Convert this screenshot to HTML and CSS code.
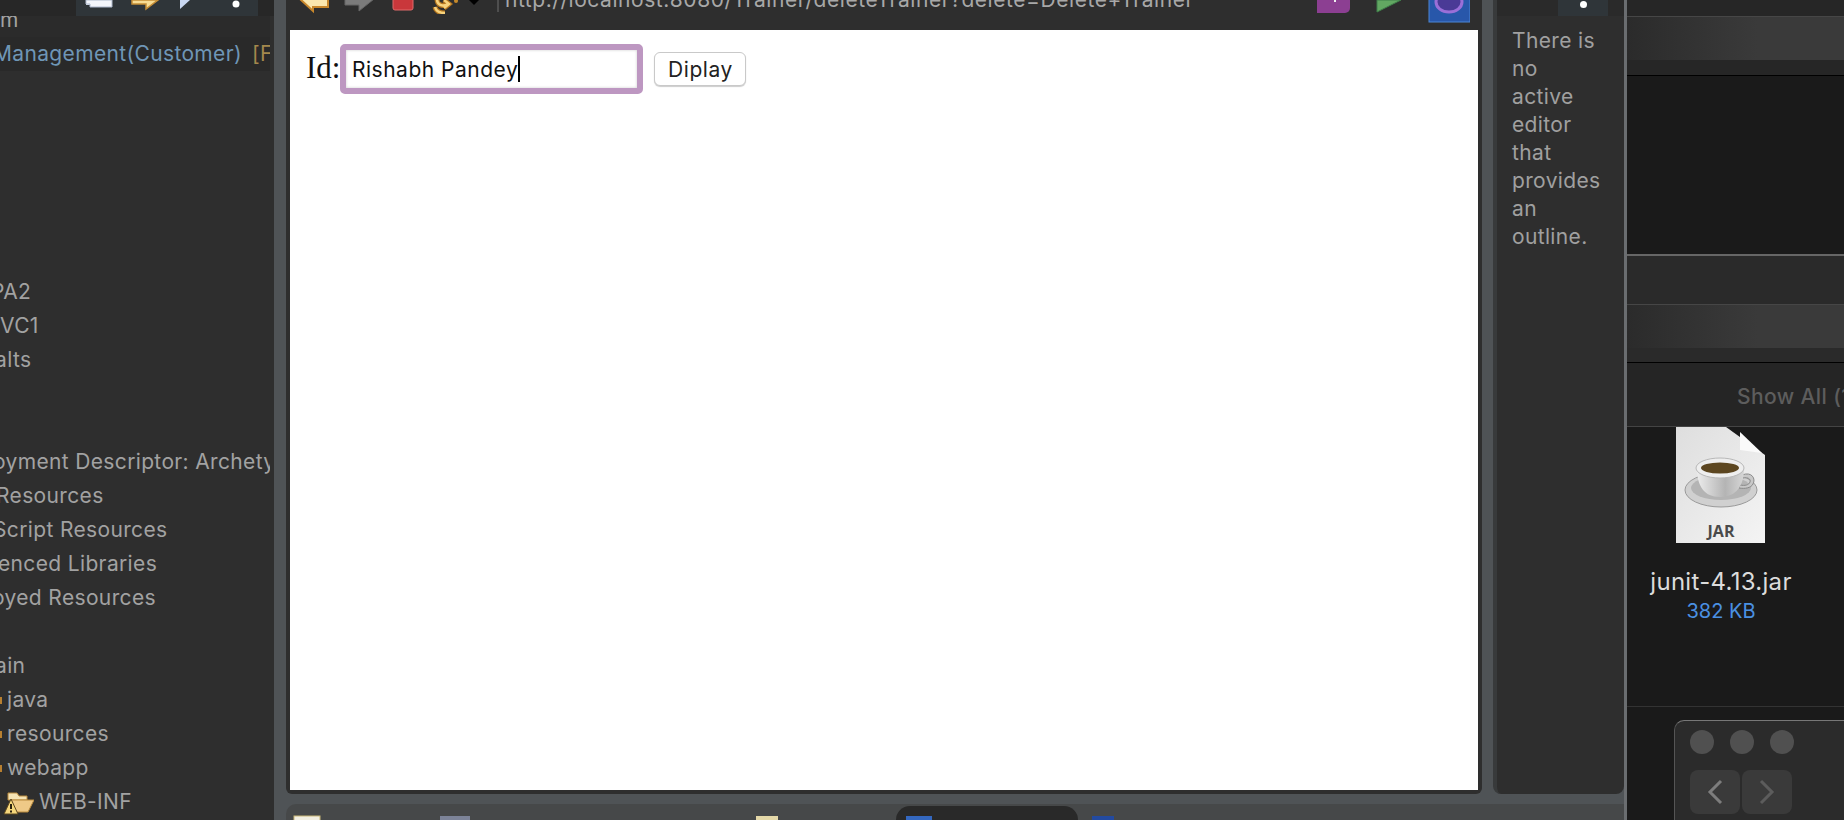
FILE: index.html
```html
<!DOCTYPE html>
<html lang="en">
<head>
    <meta charset="UTF-8">
    <meta name="viewport" content="width=device-width, initial-scale=1.0">
    <title>Eclipse - deleteTrainer</title>
    <link rel="stylesheet" href="styles.css">
</head>
<body>
    <!-- Project explorer -->
    <aside class="explorer">
        <div class="view-top">
            <div class="view-tools explorer-tools">
                <svg width="182" height="16" viewBox="0 0 182 16">
                    <path d="M10 0v5h26v-5z" fill="#dfe6f2"/>
                    <path d="M14 7h22v-7h-26v4h4z" fill="#f4f6fb" stroke="#aeb9cc"/>
                    <path d="M56 0v4h14v5l12-9z" fill="#f8dc94" stroke="#c58d35" stroke-width="1.5"/>
                    <path d="M104 0h10l-10 9z" fill="#c9d8f2"/>
                    <circle cx="160" cy="4" r="3.5" fill="#fff"/>
                </svg>
            </div>
        </div>
        <ul class="tree">
            <li class="row row-first">m</li>
            <li class="row row-selected"><span class="cut-m link-name">Management(Customer)</span><span class="tag">[F</span></li>
            <li class="row"></li>
            <li class="row"></li>
            <li class="row"></li>
            <li class="row"></li>
            <li class="row"></li>
            <li class="row"></li>
            <li class="row"><span class="cut-9">PA2</span></li>
            <li class="row"><span>VC1</span></li>
            <li class="row"><span class="cut-5">alts</span></li>
            <li class="row"></li>
            <li class="row"></li>
            <li class="row"><span class="cut-7">oyment Descriptor: Archetype</span></li>
            <li class="row"><span class="cut-4">Resources</span></li>
            <li class="row"><span class="cut-7">Script Resources</span></li>
            <li class="row"><span class="cut-2">enced Libraries</span></li>
            <li class="row"><span class="cut-8">oyed Resources</span></li>
            <li class="row"></li>
            <li class="row"><span class="cut-5">ain</span></li>
            <li class="row"><i class="folder-end"></i>java</li>
            <li class="row"><i class="folder-end"></i>resources</li>
            <li class="row"><i class="folder-end"></i>webapp</li>
            <li class="row">
                <svg class="folder-icon" width="32" height="26" viewBox="0 0 32 26">
                    <path d="M6 4h9l2 3h8v4H6z" fill="#f5e3b4" stroke="#b98a3c"/>
                    <path d="M9 11h23l-6 12H6z" fill="#efc987" stroke="#b98a3c"/>
                    <path d="M9 10l7 15H2z" fill="#f6d77c" stroke="#5b4620" stroke-linejoin="round"/>
                    <path d="M9 15v5M9 21.500v2" stroke="#2b2110" stroke-width="2"/>
                </svg>
                WEB-INF
            </li>
        </ul>
    </aside>

    <!-- Browser view and outline -->
    <main class="workbench">
        <div class="views">
            <section class="browser">
                <div class="browser-toolbar">
                    <svg class="nav-icons" width="200" height="14" viewBox="0 0 200 14">
                        <path d="M1 -1l13 12v-4h15v-8z" fill="#fbe7ae" stroke="#c8872b" stroke-width="2"/>
                        <path d="M46 -1v6h14v6l15-12z" fill="#7b7b7b" stroke="#666" stroke-width="1"/>
                        <rect x="94" y="-6" width="20" height="16" rx="2" fill="#c9373b" stroke="#e06a6a"/>
                        <path d="M138 -1c0 6 5 8 11 5M145 0l5 4-5 4M146 13c-5 0-9-2-10-6" fill="none" stroke="#b5761f" stroke-width="5"/>
                        <path d="M138 -1c0 6 5 8 11 5M145 0l5 4-5 4M146 13c-5 0-9-2-10-6" fill="none" stroke="#f7d27c" stroke-width="2.500"/>
                        <circle cx="157" cy="1" r="2" fill="#c68a2b"/>
                        <path d="M170 0h10l-5 5z" fill="#000"/>
                        <path d="M199 0v12" stroke="#5a5a5a" stroke-width="1.500"/>
                    </svg>
                    <div class="url">http://localhost:8080/Trainer/deleteTrainer?delete=Delete+Trainer</div>
                    <svg class="run-icons" width="154" height="23" viewBox="0 0 154 23">
                        <path d="M1 0h33v8a5 5 0 0 1-5 5H1z" fill="#8c3f92"/>
                        <path d="M19 0v2" stroke="#eee" stroke-width="2"/>
                        <path d="M61 0v12l24-12z" fill="#62a862" stroke="#3f7f4a"/>
                        <rect x="113" y="-6" width="41" height="28" fill="#2857aa" stroke="#4a86d6"/>
                        <ellipse cx="133" cy="2" rx="13" ry="10" fill="#4a3a96" stroke="#9a6fd8" stroke-width="3"/>
                    </svg>
                </div>
                <div class="web-page">
                    <label class="id-label">Id:</label>
                    <div class="id-input">Rishabh Pandey<span class="caret"></span></div>
                    <button class="show-btn" type="button">Diplay</button>
                </div>
            </section>
            <section class="outline">
                <div class="view-top">
                    <div class="view-tools outline-tools"><span class="dot"></span></div>
                </div>
                <p class="outline-text">There is<br>no<br>active<br>editor<br>that<br>provides<br>an<br>outline.</p>
            </section>
        </div>
        <div class="tab-bar">
            <svg class="tab-icons" width="610" height="12" viewBox="0 0 610 12">
                <rect x="8" y="4" width="26" height="12" fill="#f2efe2" stroke="#c9b878"/>
                <rect x="154" y="4" width="30" height="12" fill="#7c8398"/>
                <rect x="470" y="4" width="22" height="12" fill="#e4d8a8"/>
            </svg>
            <div class="active-tab"><i class="tab-mark"></i></div>
            <i class="tab-next"></i>
        </div>
    </main>

    <!-- Safari window behind -->
    <section class="behind">
        <div class="stripe stripe-top"><div class="title-band"></div></div>
        <div class="pane pane-one"></div>
        <div class="stripe stripe-second"><div class="title-band"></div></div>
        <div class="show-all">Show All (1)</div>
        <div class="files">
            <div class="file">
                <svg class="jar-icon" width="90" height="117" viewBox="0 0 90 117">
                    <defs>
                        <linearGradient id="pageFill" x1="0" y1="0" x2="1" y2="1">
                            <stop offset="0" stop-color="#dedede"/>
                            <stop offset="1" stop-color="#f4f4f4"/>
                        </linearGradient>
                        <linearGradient id="cupFill" x1="0" y1="0" x2="1" y2="0">
                            <stop offset="0" stop-color="#ececec"/>
                            <stop offset="0.6" stop-color="#b4b4b4"/>
                            <stop offset="1" stop-color="#d6d6d6"/>
                        </linearGradient>
                    </defs>
                    <path d="M0 0h50l39 28v88H0z" fill="url(#pageFill)"/>
                    <path d="M64 5l22 21-22-3z" fill="#fafafa"/>
                    <ellipse cx="45" cy="63" rx="36" ry="17" fill="#d0d0d0" stroke="#9a9a9a"/>
                    <ellipse cx="45" cy="61" rx="30" ry="12" fill="#b4b4b4"/>
                    <path d="M66 48c10-4 14 4 11 9-2 4-8 5-14 4l1-3c5 1 9 0 10-3 1-3-2-5-7-4z" fill="#c8c8c8" stroke="#8a8a8a"/>
                    <path d="M21 41c0 18 7 29 23 29s24-11 24-29z" fill="url(#cupFill)"/>
                    <ellipse cx="44" cy="41" rx="24" ry="10" fill="#eeeeee" stroke="#b8b8b8"/>
                    <ellipse cx="44" cy="41" rx="19" ry="5.500" fill="#5c4620"/>
                    <text class="jar-text" x="45" y="110" text-anchor="middle">JAR</text>
                </svg>
                <div class="file-name">junit-4.13.jar</div>
                <div class="file-size">382 KB</div>
            </div>
        </div>
        <div class="mini-window">
            <div class="traffic"><span></span><span></span><span></span></div>
            <div class="pager">
                <button class="pager-btn" type="button">
                    <svg width="16" height="26" viewBox="0 0 16 26"><path d="M14 2L3 13l11 11" fill="none" stroke="#7d7d7d" stroke-width="3"/></svg>
                </button>
                <button class="pager-btn" type="button">
                    <svg width="16" height="26" viewBox="0 0 16 26"><path d="M2 2l11 11L2 24" fill="none" stroke="#5c5c5c" stroke-width="3"/></svg>
                </button>
            </div>
        </div>
    </section>
</body>
</html>
```

FILE: styles.css
```css
* {
    box-sizing: border-box;
}
html, body {
    height: 100%;
}
body {
    margin: 0;
    display: flex;
    width: 1844px;
    height: 820px;
    overflow: hidden;
    background-color: #1a1a1a;
    font-family: Inter, "Noto Sans", sans-serif;
}
svg {
    display: block;
}

/* Project explorer */
.explorer {
    width: 274px;
    flex: none;
    background-color: #2e2e2e;
}
.view-top {
    height: 16px;
    background-color: #272727;
    overflow: hidden;
}
.view-tools {
    height: 16px;
    background-color: #2f3539;
}
.explorer-tools {
    margin-left: 76px;
    width: 182px;
}
.tree {
    list-style: none;
    margin: 0;
    padding: 0;
    width: 270px;
    overflow: hidden;
    color: #a2a2a2;
    font-size: 21px;
    letter-spacing: 0.35px;
}
.row {
    height: 34px;
    line-height: 34px;
    white-space: nowrap;
    overflow: hidden;
    display: flex;
    align-items: center;
}
.row-first {
    height: 21px;
    padding-bottom: 13px;
    background-color: #2b2b2b;
    line-height: 8px;
}
.row-selected {
    background-color: #292929;
}
.link-name {
    color: #6f96b6;
}
.tag {
    margin-left: 10px;
    color: #a4884d;
}
.cut-m {
    margin-left: -7px;
}
.cut-2 {
    margin-left: -2px;
}
.cut-4 {
    margin-left: -4px;
}
.cut-5 {
    margin-left: -5px;
}
.cut-7 {
    margin-left: -7px;
}
.cut-8 {
    margin-left: -8px;
}
.cut-9 {
    margin-left: -9px;
}
.folder-end {
    width: 2px;
    height: 7px;
    margin-right: 5px;
    background-color: #b77f30;
}
.folder-icon {
    margin: 0 5px 0 2px;
}

/* Centre: browser view and outline sit on the grey sash */
.workbench {
    width: 1353px;
    flex: none;
    display: flex;
    flex-direction: column;
    background-color: #4f5356;
    border-right: 3px solid #6a6d70;
    padding-left: 12px;
}
.views {
    height: 794px;
    flex: none;
    display: flex;
    gap: 11px;
}
.browser {
    width: 1196px;
    flex: none;
    display: flex;
    flex-direction: column;
    padding: 0 4px 4px;
    background-color: #2e2e2e;
    border-radius: 0 0 6px 6px;
}
.browser-toolbar {
    height: 30px;
    flex: none;
    display: flex;
    align-items: flex-start;
    overflow: hidden;
    padding-left: 9px;
}
.nav-icons {
    flex: none;
}
.url {
    flex: 1;
    margin: -17px 0 0 6px;
    height: 34px;
    line-height: 34px;
    font-size: 21px;
    letter-spacing: 0.55px;
    color: #a8a8a8;
    white-space: nowrap;
    overflow: hidden;
}
.run-icons {
    flex: none;
    margin-right: 8px;
}
.web-page {
    flex: 1;
    display: flex;
    align-items: flex-start;
    padding: 14px 0 0 16px;
    background-color: #fff;
}
.id-label {
    width: 34px;
    font-family: "Liberation Serif", serif;
    font-size: 31px;
    line-height: 40px;
    margin-top: 4px;
    color: #111;
}
.id-input {
    width: 303px;
    height: 50px;
    display: flex;
    align-items: center;
    padding-left: 6px;
    border: 6px solid #bd97c1;
    border-radius: 5px;
    font-size: 21px;
    letter-spacing: 0.5px;
    color: #111;
    box-shadow: inset 0 0 3px rgba(0, 0, 0, 0.2);
}
.caret {
    width: 2px;
    height: 26px;
    background-color: #000;
}
.show-btn {
    width: 92px;
    height: 34px;
    margin: 8px 0 0 11px;
    padding: 1px 0 0 1px;
    background-color: #fff;
    border: 1px solid #c9c9c9;
    border-radius: 6px;
    box-shadow: 0 1px 1px rgba(0, 0, 0, 0.2);
    font-family: Inter, sans-serif;
    font-size: 21px;
    letter-spacing: 0.6px;
    color: #222;
}

/* Outline view */
.outline {
    width: 131px;
    flex: none;
    background-color: #2e2e2e;
    border-left: 4px solid #383a3b;
    border-radius: 0 0 8px 8px;
}
.outline .view-top {
    background-color: #2a2a2a;
}
.outline-tools {
    width: 50px;
    margin-left: 61px;
    display: flex;
    justify-content: center;
}
.dot {
    width: 7px;
    height: 7px;
    margin-top: 1px;
    border-radius: 50%;
    background-color: #fff;
}
.outline-text {
    margin: 11px 0 0 15px;
    font-size: 21px;
    letter-spacing: 0.35px;
    line-height: 28px;
    color: #a0a0a0;
}

/* Editor tabs along the bottom */
.tab-bar {
    flex: 1;
    margin-top: 10px;
    display: flex;
    background-color: #464849;
    border-radius: 10px 0 0 0;
    overflow: hidden;
}
.tab-icons {
    flex: none;
    margin-top: 8px;
}
.active-tab {
    width: 182px;
    height: 14px;
    flex: none;
    margin-top: 2px;
    padding: 10px 0 0 10px;
    background-color: #292929;
    border-radius: 14px 14px 0 0;
}
.tab-mark {
    display: block;
    width: 26px;
    height: 6px;
    background-color: #3468c0;
}
.tab-next {
    width: 22px;
    height: 4px;
    margin: 12px 0 0 14px;
    background-color: #234aa0;
}

/* Window behind */
.behind {
    flex: 1;
    min-width: 0;
    display: flex;
    flex-direction: column;
    background-color: #1a1a1a;
    overflow: hidden;
}
.stripe {
    flex: none;
    padding-top: 16px;
    background-color: #262626;
    border-bottom: 1px solid #000;
}
.stripe-top {
    height: 76px;
}
.title-band {
    height: 44px;
    background: linear-gradient(90deg, #2b2b2b, #3a3a3a 60%);
    border-top: 1px solid #464646;
}
.pane-one {
    height: 178px;
    flex: none;
    background-color: #1a1a1a;
}
.stripe-second {
    height: 109px;
    padding-top: 48px;
    background-color: #2a2a2a;
    border-top: 2px solid #666;
}
.show-all {
    height: 64px;
    flex: none;
    padding-left: 110px;
    line-height: 67px;
    white-space: nowrap;
    font-size: 21px;
    letter-spacing: 0.4px;
    font-weight: 500;
    color: #5d5d5d;
    background-color: #252525;
    border-bottom: 1px solid #444;
}
.files {
    height: 280px;
    flex: none;
    padding-left: 49px;
    border-bottom: 1px solid #333;
}
.file {
    width: 90px;
    display: flex;
    flex-direction: column;
    align-items: center;
}
.jar-icon {
    flex: none;
}
.jar-text {
    font-family: "Open Sans", sans-serif;
    font-size: 16px;
    font-weight: 700;
    fill: #4a4a4a;
}
.file-name {
    margin-top: 23px;
    white-space: nowrap;
    font-size: 24px;
    letter-spacing: 0.3px;
    line-height: 30px;
    color: #dcdcdc;
}
.file-size {
    margin-top: 2px;
    white-space: nowrap;
    font-size: 20px;
    line-height: 24px;
    color: #4a90e2;
}
.mini-window {
    margin: 13px 0 0 47px;
    flex: 1;
    padding: 9px 15px;
    background-color: #2b2b2b;
    border-top: 1px solid #777;
    border-left: 1px solid #555;
    border-radius: 10px 0 0 0;
}
.traffic {
    display: flex;
    gap: 16px;
}
.traffic span {
    width: 24px;
    height: 24px;
    border-radius: 50%;
    background-color: #505050;
}
.pager {
    display: flex;
    gap: 2px;
    margin-top: 16px;
}
.pager-btn {
    width: 50px;
    height: 44px;
    display: flex;
    align-items: center;
    justify-content: center;
    padding: 0;
    border: none;
    border-radius: 8px;
    background-color: #3a3a3a;
}
```
